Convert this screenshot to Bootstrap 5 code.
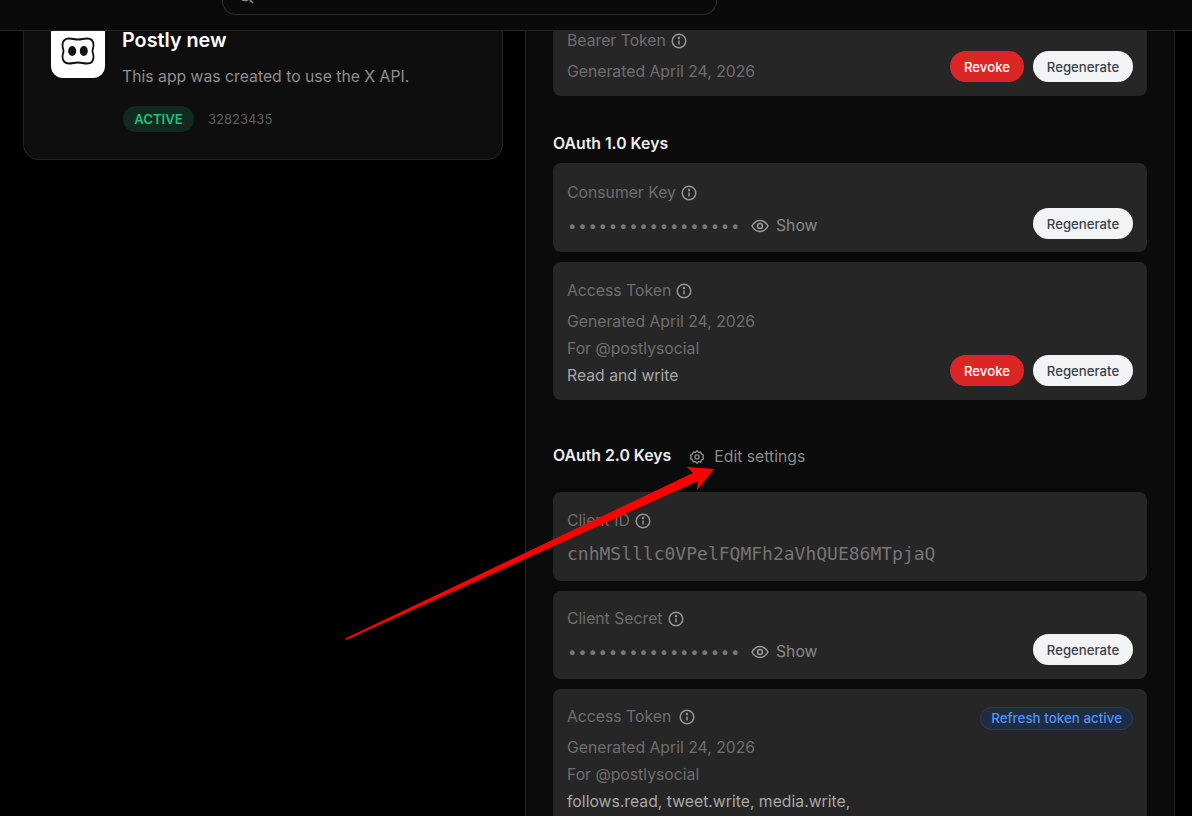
<!DOCTYPE html>
<html lang="en">
<head>
    <meta charset="UTF-8">
    <meta name="viewport" content="width=device-width, initial-scale=1.0">
    <title>Postly new - Keys</title>
    <link href="https://cdn.jsdelivr.net/npm/bootstrap@5.3.0/dist/css/bootstrap.min.css" rel="stylesheet">
    <style>
        html, body { height: 816px; overflow: hidden; }
        body {
            background: #000;
            font-family: Inter, "Liberation Sans", sans-serif;
            font-size: 15.75px;
            color: #e7e9ea;
            position: relative;
        }
        .top-strip { height: 31px; background: #0a0a0a; border-bottom: 1px solid #232323; padding-left: 222px; }
        .search-stub {
            width: 495px; height: 15px;
            border: 1px solid #2c2c2c; border-top: 0;
            border-radius: 0 0 14px 14px;
            padding-left: 14px;
            overflow: hidden;
        }
        .search-stub svg { display: block; margin-top: -13px; }
        .page-row { height: 785px; }
        .left-side { width: 525px; padding-left: 23px; flex: none; }
        .app-card {
            width: 480px; height: 129px;
            background: #0e0e0e;
            border: 1px solid #232323; border-top: 0;
            border-radius: 0 0 16px 16px;
            padding-left: 27px;
            gap: 17px;
        }
        .app-logo {
            width: 54px; height: 47px;
            background: #fff;
            border-radius: 0 0 12px 12px;
            flex: none;
        }
        .app-logo svg { margin-bottom: 7px; }
        .app-title { font-size: 19.800px; font-weight: 600; line-height: 18px; color: #fff; }
        .app-desc { line-height: 22px; color: #8f8f8f; margin-top: 17px; }
        .app-status { margin-top: 18px; margin-left: 1px; gap: 14px; }
        .status-pill {
            font-size: 13.200px; font-weight: 600; line-height: 26px;
            height: 26px; width: 71px; text-align: center;
            color: #25bd7c; background: #12291f;
            border-radius: 13px;
        }
        .app-id { font-size: 13px; color: #5f5f5f; padding-top: 1px; }
        .keys-panel {
            width: 650px; flex: none;
            background: #0b0b0b;
            border-left: 1px solid #232323; border-right: 1px solid #232323;
            padding: 0 27px;
        }
        .key-box {
            background: #262626;
            border-radius: 8px;
            padding: 0 14px;
        }
        .box-bearer { height: 65px; border-radius: 0 0 8px 8px; }
        .box-bearer .key-label { margin-top: -1px; margin-bottom: 6px; }
        .box-short { height: 89px; margin-bottom: 10px; padding-top: 19px; }
        .box-client { padding-top: 18px; }
        .box-secret { height: 88px; padding-top: 17px; }
        .box-tall { height: 138px; padding-top: 18px; }
        .box-last { height: 140px; padding-top: 17px; }
        .key-label { line-height: 22px; color: #6e6e6e; }
        .label-gap { margin-bottom: 5.500px; }
        .key-meta { line-height: 27px; color: #6e6e6e; }
        .key-scope { line-height: 27px; color: #a8a8a8; }
        .info-icon { width: 16px; height: 16px; margin-left: 5px; flex: none; }
        .section-head { font-size: 15.800px; font-weight: 600; line-height: 20px; color: #eeeeee; }
        .oauth-one { margin-top: 37px; margin-bottom: 10px; padding-top: 1px; height: 20px; line-height: 20px; }
        .oauth-two { margin-top: 45px; margin-bottom: 25px; height: 22px; }
        .gear-icon { margin-left: 18px; margin-right: 9px; margin-top: 2px; }
        .edit-link { color: #8a8a8a; line-height: 22px; padding-top: 2px; }
        .pill-btn {
            font-size: 13.200px; font-weight: 500; line-height: 15px;
            padding: 8px 0 6px; border-radius: 16px; border: 0;
            height: 31px;
        }
        .pill-revoke { background: #dc2626; color: #fff; width: 74px; }
        .pill-regen { background: #f1f3f4; color: #3b4148; width: 100px; }
        .pill-pair { gap: 9px; }
        .pill-pair-bearer { margin-top: 20px; }
        .pill-bottom { margin-bottom: 13px; }
        .pill-bottom-up { margin-bottom: 14px; }
        .secret-row { margin-top: 11px; }
        .secret-dots { font-size: 15px; letter-spacing: 1.750px; color: #777; line-height: 22px; width: 184px; padding-left: 1px; white-space: nowrap; overflow: hidden; flex: none; }
        .show-link { color: #8a8a8a; line-height: 22px; margin-left: 7px; }
        .client-value { font-family: "DejaVu Sans Mono", "Liberation Mono", monospace; font-size: 18px; line-height: 24px; color: #757575; margin-top: 10px; }
        .refresh-pill {
            font-size: 13.400px; font-weight: 500; line-height: 21px;
            color: #4f94f0; background: #1e2c45; border: 1px solid #2a3c5a;
            border-radius: 12px; padding: 0 10px; height: 23px; margin-top: 1px;
        }
        .arrow-layer { position: absolute; left: 0; top: 0; width: 1192px; height: 816px; pointer-events: none; }
    </style>
</head>
<body>
    <div class="top-strip">
        <div class="search-stub">
            <svg width="18" height="18" viewBox="0 0 18 18" fill="none" stroke="#8a8a8a" stroke-width="1.5"><circle cx="8" cy="8" r="5.5"/><path d="M12 12l4 4"/></svg>
        </div>
    </div>

    <div class="page-row d-flex">
        <!-- App summary -->
        <div class="left-side">
            <div class="app-card d-flex">
                <div class="app-logo d-flex align-items-center justify-content-center">
                    <svg width="34" height="30" viewBox="0 0 34 30" fill="none">
                        <path d="M8 2.500C12 2.500 13 3.500 17 3.500S22 2.500 26 2.500C30 2.500 32.500 5 32.500 9C32.500 12 31.500 13 31.500 15S32.500 18 32.500 21C32.500 25 30 27.500 26 27.500C22 27.500 21 26.500 17 26.500S12 27.500 8 27.500C4 27.500 1.500 25 1.500 21C1.500 18 2.500 17 2.500 15S1.500 12 1.500 9C1.500 5 4 2.500 8 2.500Z" stroke="#111" stroke-width="1.800"/>
                        <ellipse cx="11.200" cy="15" rx="4" ry="5" fill="#111"/><ellipse cx="22.800" cy="15" rx="4" ry="5" fill="#111"/>
                    </svg>
                </div>
                <div>
                    <div class="app-title">Postly new</div>
                    <div class="app-desc">This app was created to use the X API.</div>
                    <div class="d-flex align-items-center app-status">
                        <span class="status-pill">ACTIVE</span>
                        <span class="app-id">32823435</span>
                    </div>
                </div>
            </div>
        </div>

        <!-- Keys -->
        <div class="keys-panel">
            <div class="key-box box-bearer d-flex justify-content-between">
                <div>
                    <div class="key-label d-flex align-items-center">Bearer Token
                        <svg class="info-icon" viewBox="0 0 16 16" fill="none" stroke="#969696" stroke-width="1.5"><circle cx="8" cy="8" r="6.8"/><path d="M8 7.4v4"/><circle cx="8" cy="4.9" r=".5" fill="#969696"/></svg>
                    </div>
                    <div class="key-meta">Generated April 24, 2026</div>
                </div>
                <div class="d-flex pill-pair pill-pair-bearer align-items-start">
                    <button class="btn pill-btn pill-revoke">Revoke</button>
                    <button class="btn pill-btn pill-regen">Regenerate</button>
                </div>
            </div>

            <div class="section-head oauth-one">OAuth 1.0 Keys</div>

            <div class="key-box box-short d-flex justify-content-between">
                <div>
                    <div class="key-label d-flex align-items-center">Consumer Key
                        <svg class="info-icon" viewBox="0 0 16 16" fill="none" stroke="#969696" stroke-width="1.5"><circle cx="8" cy="8" r="6.8"/><path d="M8 7.4v4"/><circle cx="8" cy="4.9" r=".5" fill="#969696"/></svg>
                    </div>
                    <div class="d-flex align-items-center secret-row">
                        <span class="secret-dots">•••••••••••••••••</span>
                        <svg width="18" height="14" viewBox="0 0 18 14" fill="none" stroke="#9a9a9a" stroke-width="1.5"><path d="M1 7c2-3.600 4.800-5.500 8-5.500S15 3.400 17 7c-2 3.600-4.800 5.500-8 5.500S3 10.600 1 7z"/><circle cx="9" cy="7" r="2.500"/></svg>
                        <span class="show-link">Show</span>
                    </div>
                </div>
                <div class="align-self-end pill-bottom"><button class="btn pill-btn pill-regen">Regenerate</button></div>
            </div>

            <div class="key-box box-tall d-flex justify-content-between">
                <div>
                    <div class="key-label d-flex align-items-center label-gap">Access Token
                        <svg class="info-icon" viewBox="0 0 16 16" fill="none" stroke="#969696" stroke-width="1.5"><circle cx="8" cy="8" r="6.8"/><path d="M8 7.4v4"/><circle cx="8" cy="4.9" r=".5" fill="#969696"/></svg>
                    </div>
                    <div class="key-meta">Generated April 24, 2026</div>
                    <div class="key-meta">For @postlysocial</div>
                    <div class="key-scope">Read and write</div>
                </div>
                <div class="d-flex pill-pair align-self-end pill-bottom-up">
                    <button class="btn pill-btn pill-revoke">Revoke</button>
                    <button class="btn pill-btn pill-regen">Regenerate</button>
                </div>
            </div>

            <div class="d-flex align-items-center oauth-two">
                <span class="section-head">OAuth 2.0 Keys</span>
                <svg class="gear-icon" width="16" height="16" viewBox="0 0 24 24" fill="none" stroke="#8e8e8e" stroke-width="2" stroke-linejoin="round"><circle cx="12" cy="12" r="3.200"/><path d="M12 2.500l2.200 2.600 3.300-.6 1.200 3.200 3 1.300-.9 3 .9 3-3 1.300-1.200 3.200-3.300-.6L12 21.500l-2.200-2.600-3.300.6-1.200-3.200-3-1.300.9-3-.9-3 3-1.300 1.200-3.200 3.300.6z"/></svg>
                <span class="edit-link">Edit settings</span>
            </div>

            <div class="key-box box-short box-client">
                <div class="key-label d-flex align-items-center">Client ID
                    <svg class="info-icon" viewBox="0 0 16 16" fill="none" stroke="#969696" stroke-width="1.5"><circle cx="8" cy="8" r="6.8"/><path d="M8 7.4v4"/><circle cx="8" cy="4.9" r=".5" fill="#969696"/></svg>
                </div>
                <div class="client-value">cnhMSlllc0VPelFQMFh2aVhQUE86MTpjaQ</div>
            </div>

            <div class="key-box box-short box-secret d-flex justify-content-between">
                <div>
                    <div class="key-label d-flex align-items-center">Client Secret
                        <svg class="info-icon" viewBox="0 0 16 16" fill="none" stroke="#969696" stroke-width="1.5"><circle cx="8" cy="8" r="6.8"/><path d="M8 7.4v4"/><circle cx="8" cy="4.9" r=".5" fill="#969696"/></svg>
                    </div>
                    <div class="d-flex align-items-center secret-row">
                        <span class="secret-dots">•••••••••••••••••</span>
                        <svg width="18" height="14" viewBox="0 0 18 14" fill="none" stroke="#9a9a9a" stroke-width="1.5"><path d="M1 7c2-3.600 4.800-5.500 8-5.500S15 3.400 17 7c-2 3.600-4.800 5.500-8 5.500S3 10.600 1 7z"/><circle cx="9" cy="7" r="2.500"/></svg>
                        <span class="show-link">Show</span>
                    </div>
                </div>
                <div class="align-self-end pill-bottom-up"><button class="btn pill-btn pill-regen">Regenerate</button></div>
            </div>

            <div class="key-box box-last d-flex justify-content-between">
                <div>
                    <div class="key-label d-flex align-items-center label-gap">Access Token
                        <svg class="info-icon ms-2" viewBox="0 0 16 16" fill="none" stroke="#969696" stroke-width="1.5"><circle cx="8" cy="8" r="6.8"/><path d="M8 7.4v4"/><circle cx="8" cy="4.9" r=".5" fill="#969696"/></svg>
                    </div>
                    <div class="key-meta">Generated April 24, 2026</div>
                    <div class="key-meta">For @postlysocial</div>
                    <div class="key-scope">follows.read, tweet.write, media.write,</div>
                </div>
                <div><span class="refresh-pill d-inline-block">Refresh token active</span></div>
            </div>
        </div>
    </div>

    <!-- Annotation drawn over the screenshot -->
    <svg class="arrow-layer" viewBox="0 0 1192 816"><polygon points="345,638.500 693,473 687,467 714,469 697,490 698,481 346,640" fill="#ff0000"/></svg>
</body>
</html>
